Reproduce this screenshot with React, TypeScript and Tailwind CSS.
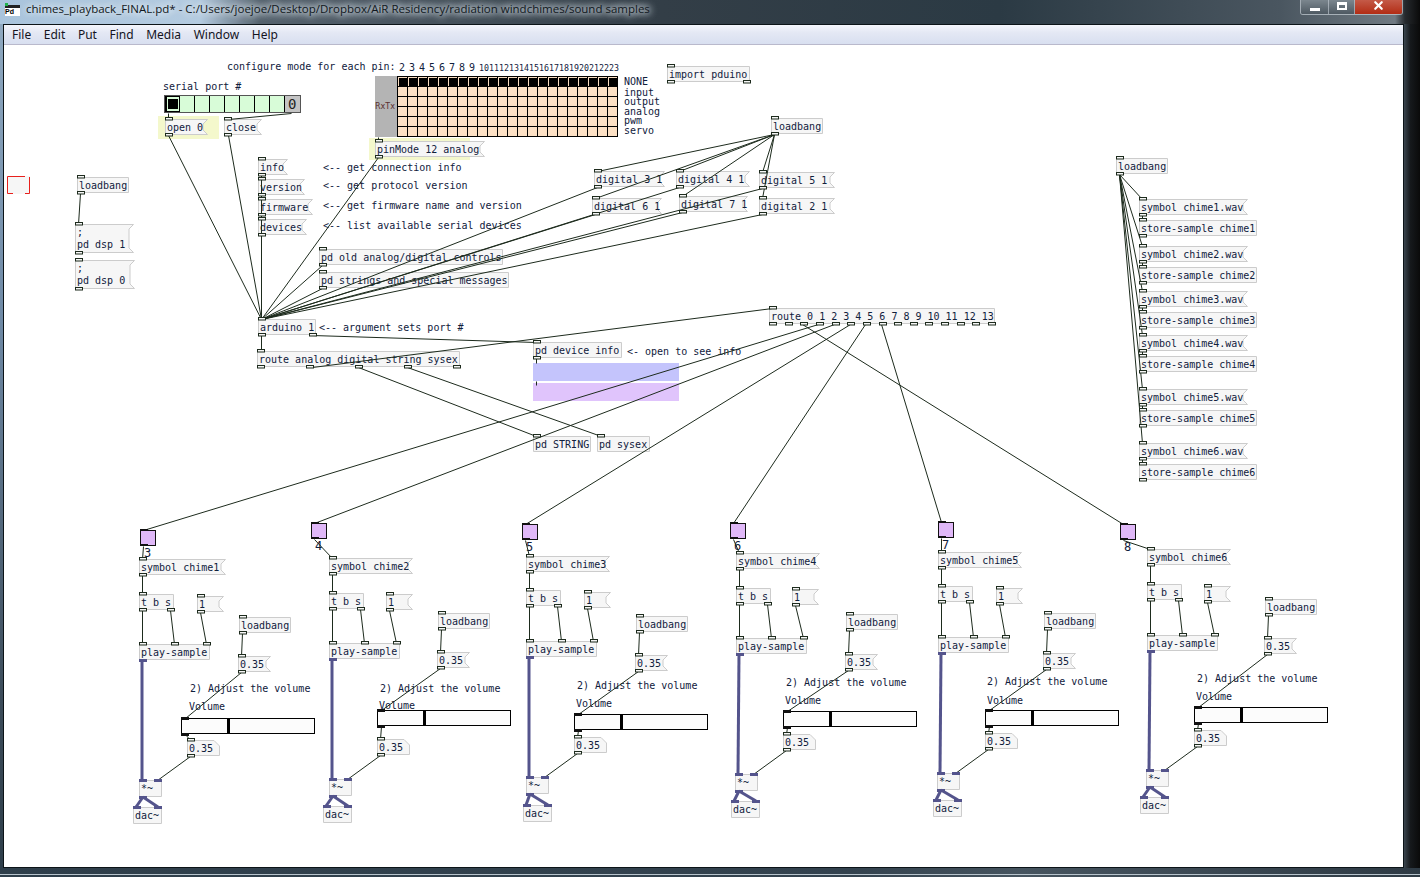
import { X } from 'lucide-react';

type Kind = 'obj' | 'msg' | 'num';

interface PdNode {
  kind: Kind;
  x: number;
  y: number;
  w: number;
  h?: number;
  text: string;
  ins?: number[];
  outs?: number[];
}

const OX = 4;
const OY = 45;
const mono = "font-['DejaVu_Sans_Mono',monospace] text-[10px] text-[#10203c]";

// evenly spread inlets, first one left, last one right
function spread(w: number, n: number) {
  if (n === 1) return [0];
  return Array.from({ length: n }, (_, i) => Math.round((i * (w - 7)) / (n - 1)));
}

function obj(x: number, y: number, w: number, text: string, ins = 1, outs = 1, h = 16): PdNode {
  return { kind: 'obj', x, y, w, h, text, ins: spread(w, ins), outs: outs ? spread(w, outs) : [] };
}

function msg(x: number, y: number, w: number, text: string, h = 16): PdNode {
  return { kind: 'msg', x, y, w, h, text, ins: [0], outs: [0] };
}

const columns = [
  { n: '3', name: 'chime1', sq: [140, 530], sym: [139, 559, 87], tbs: [139, 594], one: [197, 596], play: [139, 644], lb: [239, 617], m: [238, 656], cm: [190, 683], vol: [189, 701], sl: [181, 718], num: [187, 740], mul: [139, 780], dac: [133, 807] },
  { n: '4', name: 'chime2', sq: [311, 523], sym: [329, 558, 84], tbs: [329, 593], one: [386, 594], play: [329, 643], lb: [438, 613], m: [437, 652], cm: [380, 683], vol: [379, 700], sl: [377, 710], num: [377, 739], mul: [329, 779], dac: [323, 806] },
  { n: '5', name: 'chime3', sq: [522, 524], sym: [526, 556, 84], tbs: [526, 590], one: [584, 592], play: [526, 641], lb: [636, 616], m: [635, 655], cm: [577, 680], vol: [576, 698], sl: [574, 714], num: [574, 737], mul: [526, 777], dac: [523, 805] },
  { n: '6', name: 'chime4', sq: [730, 523], sym: [736, 553, 84], tbs: [736, 588], one: [792, 589], play: [736, 638], lb: [846, 614], m: [845, 654], cm: [786, 677], vol: [785, 695], sl: [783, 711], num: [783, 734], mul: [735, 774], dac: [731, 801] },
  { n: '7', name: 'chime5', sq: [938, 522], sym: [938, 552, 84], tbs: [938, 586], one: [996, 588], play: [938, 637], lb: [1044, 613], m: [1043, 653], cm: [987, 676], vol: [987, 695], sl: [985, 710], num: [985, 733], mul: [937, 773], dac: [933, 800] },
  { n: '8', name: 'chime6', sq: [1120, 524], sym: [1147, 549, 84], tbs: [1147, 584], one: [1204, 586], play: [1147, 635], lb: [1265, 599], m: [1264, 638], cm: [1197, 673], vol: [1196, 691], sl: [1194, 707], num: [1194, 730], mul: [1146, 770], dac: [1140, 797] },
];

const samples = [
  [199, 220, 'chime1'],
  [246, 267, 'chime2'],
  [291, 312, 'chime3'],
  [335, 356, 'chime4'],
  [389, 410, 'chime5'],
  [443, 464, 'chime6'],
] as const;

const digitals: [number, number, number, string][] = [
  [594, 171, 71, 'digital 3 1'],
  [676, 171, 74, 'digital 4 1'],
  [759, 172, 76, 'digital 5 1'],
  [592, 198, 70, 'digital 6 1'],
  [679, 196, 69, 'digital 7 1'],
  [759, 198, 76, 'digital 2 1'],
];

const nodes: PdNode[] = [
  msg(165, 119, 43, 'open 0'),
  msg(224, 119, 38, 'close'),
  msg(258, 159, 30, 'info'),
  msg(258, 179, 47, 'version'),
  msg(258, 199, 55, 'firmware'),
  msg(258, 219, 49, 'devices'),
  msg(375, 141, 110, 'pinMode 12 analog'),
  obj(667, 66, 83, 'import pduino', 1, 2),
  obj(771, 118, 52, 'loadbang'),
  ...digitals.map(([x, y, w, t]) => msg(x, y, w, t)),
  obj(77, 177, 52, 'loadbang'),
  msg(75, 224, 59, ';\npd dsp 1', 29),
  msg(75, 260, 60, ';\npd dsp 0', 29),
  obj(319, 249, 184, 'pd old analog/digital controls'),
  obj(319, 272, 190, 'pd strings and special messages'),
  obj(258, 319, 58, 'arduino 1', 1, 2),
  obj(257, 351, 203, 'route analog digital string sysex', 1, 5),
  obj(533, 342, 89, 'pd device info'),
  obj(533, 436, 58, 'pd STRING', 1, 0),
  obj(597, 436, 53, 'pd sysex', 1, 0),
  obj(769, 308, 226, 'route 0 1 2 3 4 5 6 7 8 9 10 11 12 13', 1, 15),
  obj(1116, 158, 52, 'loadbang'),
  ...samples.flatMap(([a, b, name]) => [
    msg(1139, a, 109, `symbol ${name}.wav`),
    obj(1139, b, 118, `store-sample ${name}`),
  ]),
  ...columns.flatMap((c) => [
    msg(c.sym[0], c.sym[1], c.sym[2], `symbol ${c.name}`),
    { kind: 'obj', x: c.tbs[0], y: c.tbs[1], w: 35, h: 16, text: 't b s', ins: [0], outs: [0, 28] } as PdNode,
    msg(c.one[0], c.one[1], 27, '1'),
    { kind: 'obj', x: c.play[0], y: c.play[1], w: 71, h: 16, text: 'play-sample', ins: [0, 32, 64], outs: [] } as PdNode,
    obj(c.lb[0], c.lb[1], 52, 'loadbang'),
    msg(c.m[0], c.m[1], 33, '0.35'),
    { kind: 'num', x: c.num[0], y: c.num[1], w: 33, h: 16, text: '0.35', ins: [0], outs: [0] } as PdNode,
    { kind: 'obj', x: c.mul[0], y: c.mul[1], w: 23, h: 17, text: '*~', ins: [], outs: [] } as PdNode,
    { kind: 'obj', x: c.dac[0], y: c.dac[1], w: 29, h: 17, text: 'dac~', ins: [], outs: [] } as PdNode,
  ]),
];

const loadOuts: [number, number][] = [
  [597, 171],
  [679, 171],
  [762, 172],
  [595, 198],
  [682, 196],
  [762, 198],
];

const fanIns: [number, number][] = [
  [168, 135],
  [228, 135],
  [378, 157],
  [322, 265],
  [322, 288],
  [597, 187],
  [679, 187],
  [762, 188],
  [595, 214],
  [682, 212],
  [762, 214],
];

const routeTargets: [number, number][] = [
  [818, 0],
  [834, 1],
  [850, 2],
  [865, 3],
  [881, 4],
  [802, 5],
];

type Seg = [number, number, number, number];

const wires: Seg[] = [
  [168, 113, 168, 119],
  [291, 113, 228, 119],
  [261, 175, 261, 319],
  [378, 137, 378, 141],
  [80, 193, 78, 224],
  [261, 335, 261, 351],
  [312, 335, 536, 342],
  [312, 367, 772, 308],
  [358, 367, 536, 436],
  [407, 367, 601, 436],
  [536, 358, 536, 363],
  [536, 381, 536, 385],
  ...fanIns.map(([x, y]) => [x, y, 261, 319] as Seg),
  ...loadOuts.map(([x, y]) => [774, 134, x, y] as Seg),
  ...samples.flatMap(([a, b]) => [
    [1119, 174, 1142, a] as Seg,
    [1142, a + 16, 1142, b] as Seg,
  ]),
  ...routeTargets.map(([x, i]) => [x, 324, columns[i].sq[0] + 3, columns[i].sq[1]] as Seg),
  ...columns.flatMap((c) => [
    [c.sq[0] + 3, c.sq[1] + 16, c.sym[0] + 3, c.sym[1]] as Seg,
    [c.sym[0] + 3, c.sym[1] + 16, c.tbs[0] + 3, c.tbs[1]] as Seg,
    [c.tbs[0] + 3, c.tbs[1] + 16, c.play[0] + 3, c.play[1]] as Seg,
    [c.tbs[0] + 31, c.tbs[1] + 16, c.play[0] + 35, c.play[1]] as Seg,
    [c.one[0] + 3, c.one[1] + 16, c.play[0] + 67, c.play[1]] as Seg,
    [c.lb[0] + 3, c.lb[1] + 16, c.m[0] + 3, c.m[1]] as Seg,
    [c.m[0] + 3, c.m[1] + 16, c.sl[0] + 4, c.sl[1]] as Seg,
    [c.sl[0] + 4, c.sl[1] + 16, c.num[0] + 3, c.num[1]] as Seg,
    [c.num[0] + 3, c.num[1] + 16, c.mul[0] + 18, c.mul[1]] as Seg,
  ]),
];

function PatchBox({ node }: { node: PdNode }) {
  const h = node.h ?? 16;
  const w = node.w;
  const points =
    node.kind === 'msg'
      ? `0.5,0.5 ${w - 0.5},0.5 ${w - 5},5 ${w - 5},${h - 5} ${w - 0.5},${h - 0.5} 0.5,${h - 0.5}`
      : node.kind === 'num'
        ? `0.5,0.5 ${w - 6},0.5 ${w - 0.5},6 ${w - 0.5},${h - 0.5} 0.5,${h - 0.5}`
        : `0.5,0.5 ${w - 0.5},0.5 ${w - 0.5},${h - 0.5} 0.5,${h - 0.5}`;
  return (
    <div className="absolute" style={{ left: node.x - OX, top: node.y - OY, width: w, height: h }}>
      <svg className="absolute inset-0" width={w} height={h}>
        <polygon points={points} fill="#f6f6f6" stroke="#cccccc" />
      </svg>
      <div className={`absolute inset-0 flex items-center pl-[2px] pt-[1px] leading-[12px] whitespace-pre ${mono}`}>
        {node.text}
      </div>
    </div>
  );
}

function Comment({ x, y, text }: { x: number; y: number; text: string }) {
  return (
    <div className={`absolute leading-[12px] whitespace-pre ${mono}`} style={{ left: x - OX, top: y - OY - 6 }}>
      {text}
    </div>
  );
}

function Slider({ x, y }: { x: number; y: number }) {
  return (
    <div
      className="absolute h-[16px] w-[134px] border border-black bg-[#fcfcfc]"
      style={{ left: x - OX, top: y - OY }}
    >
      <div className="absolute left-[45px] top-0 bottom-0 w-[3px] bg-black" />
    </div>
  );
}

function PinGrid() {
  return (
    <div className="absolute left-[371px] top-[31px] flex h-[61px]">
      <div className="flex w-[22px] items-center bg-[#b4b4b4] font-['DejaVu_Sans',sans-serif] text-[8px] text-[#5a3030]">
        RxTx
      </div>
      <div className="grid grid-cols-[repeat(22,10px)] border-t border-l border-black">
        {Array.from({ length: 132 }, (_, i) => (
          <div key={i} className="flex h-[10px] w-[10px] items-center justify-center border-r border-b border-black bg-[#fce0c4]">
            {i < 22 && <div className="h-[8px] w-[8px] bg-black" />}
          </div>
        ))}
      </div>
    </div>
  );
}

function PortRadio() {
  return (
    <div className="absolute left-[160px] top-[50px] flex h-[18px] w-[137px] border border-[#555555] bg-[#c4c4c4]">
      {Array.from({ length: 8 }, (_, i) => (
        <div
          key={i}
          className={`flex w-[15px] items-center justify-center border-r border-black bg-[#d8fcd8] ${i === 0 ? 'border-l-2 border-t border-b' : ''}`}
        >
          {i === 0 && <div className="h-[10px] w-[10px] bg-black" />}
        </div>
      ))}
      <div className="flex-1 pl-[3px] font-['DejaVu_Sans_Mono',monospace] text-[14px] leading-[16px] text-[#222222]">0</div>
    </div>
  );
}

function Iolets() {
  return (
    <>
      {nodes.flatMap((n, i) => {
        const h = n.h ?? 16;
        return [
          ...(n.ins ?? []).map((o, j) => (
            <rect key={`i${i}-${j}`} x={n.x + o + 0.5} y={n.y - 1.5} width={7} height={2.5} fill="#f6f6f6" stroke="#1d2b1d" />
          )),
          ...(n.outs ?? []).map((o, j) => (
            <rect key={`o${i}-${j}`} x={n.x + o + 0.5} y={n.y + h - 1.5} width={7} height={2.5} fill="#f6f6f6" stroke="#1d2b1d" />
          )),
        ];
      })}
    </>
  );
}

function PatchWires() {
  return (
    <svg className="pointer-events-none absolute inset-0" width="1400" height="823">
      <g transform={`translate(${-OX},${-OY})`}>
        {wires.map(([a, b, c, d], i) => (
          <line key={i} x1={a + 0.5} y1={b + 0.5} x2={c + 0.5} y2={d + 0.5} stroke="#1d2b1d" strokeWidth="1" />
        ))}
        {columns.map((c) => (
          <g key={c.n}>
            <line x1={c.play[0] + 3} y1={c.play[1] + 16} x2={c.mul[0] + 3} y2={c.mul[1]} stroke="#54548c" strokeWidth="3" />
            <line x1={c.mul[0] + 4} y1={c.mul[1] + 17} x2={c.dac[0] + 3} y2={c.dac[1]} stroke="#54548c" strokeWidth="3" />
            <line x1={c.mul[0] + 4} y1={c.mul[1] + 17} x2={c.dac[0] + 25} y2={c.dac[1]} stroke="#54548c" strokeWidth="3" />
            <rect x={c.play[0]} y={c.play[1] + 15} width={8} height={3} fill="#54548c" />
            <rect x={c.mul[0]} y={c.mul[1] - 1} width={8} height={3} fill="#54548c" />
            <rect x={c.mul[0] + 15} y={c.mul[1] - 1} width={8} height={3} fill="#54548c" />
            <rect x={c.mul[0]} y={c.mul[1] + 16} width={8} height={3} fill="#54548c" />
            <rect x={c.dac[0]} y={c.dac[1] - 1} width={8} height={3} fill="#54548c" />
            <rect x={c.dac[0] + 21} y={c.dac[1] - 1} width={8} height={3} fill="#54548c" />
            <rect x={c.sl[0]} y={c.sl[1] - 1} width={8} height={3} fill="#111111" />
            <rect x={c.sl[0]} y={c.sl[1] + 15} width={8} height={3} fill="#111111" />
            <rect x={c.sq[0]} y={c.sq[1] + 14} width={8} height={2} fill="#111111" />
            <rect x={c.sq[0]} y={c.sq[1] - 1} width={8} height={2} fill="#111111" />
          </g>
        ))}
        <Iolets />
      </g>
    </svg>
  );
}

function Patch() {
  const pins = [2, 3, 4, 5, 6, 7, 8, 9, 10, 11, 12, 13, 14, 15, 16, 17, 18, 19, 20, 21, 22, 23];
  const modes = [
    ['NONE', 82],
    ['input', 93],
    ['output', 102],
    ['analog', 112],
    ['pwm', 121],
    ['servo', 131],
  ] as const;
  return (
    <div className="relative flex-1 overflow-hidden bg-white">
      <div className="absolute left-[154px] top-[71px] h-[23px] w-[61px] bg-[#f4f8cc]" />
      <div className="absolute left-[365px] top-[93px] h-[22px] w-[101px] bg-[#f4f8cc]" />
      <div className="absolute left-[529px] top-[318px] h-[18px] w-[146px] bg-[#c4c4fc]" />
      <div className="absolute left-[529px] top-[338px] h-[18px] w-[146px] bg-[#e0c4fc]" />

      <Comment x={227} y={67} text="configure mode for each pin:" />
      <Comment x={163} y={87} text="serial port #" />
      <div className={`absolute left-[395px] top-[17px] flex leading-[12px] ${mono}`}>
        {pins.map((p) => (
          <span key={p} className={`w-[10px] whitespace-pre ${p > 9 ? 'text-[8.3px]' : ''}`}>{p}</span>
        ))}
      </div>
      {modes.map(([t, y]) => (
        <Comment key={t} x={624} y={y} text={t} />
      ))}
      <Comment x={323} y={168} text="<-- get connection info" />
      <Comment x={323} y={186} text="<-- get protocol version" />
      <Comment x={323} y={206} text="<-- get firmware name and version" />
      <Comment x={323} y={226} text="<-- list available serial devices" />
      <Comment x={319} y={328} text="<-- argument sets port #" />
      <Comment x={627} y={352} text="<- open to see info" />

      <PortRadio />
      <PinGrid />

      <svg className="absolute left-[3px] top-[131px]" width="23" height="18">
        <rect x="0" y="0" width="23" height="18" fill="#f6f6f6" />
        <path d="M0.5 17.5V0.5H18M6 17.5H0.5M18 17.5H22.5V1" fill="none" stroke="#e8201c" />
      </svg>

      {nodes.map((n, i) => (
        <PatchBox key={i} node={n} />
      ))}

      {columns.map((c) => (
        <div key={c.n}>
          <div
            className="absolute h-[16px] w-[16px] border border-[#111111] bg-[#e0b8f8]"
            style={{ left: c.sq[0] - OX, top: c.sq[1] - OY }}
          />
          <div
            className="absolute font-['DejaVu_Sans_Mono',monospace] text-[12px] leading-[12px] text-[#10203c]"
            style={{ left: c.sq[0] + 4 - OX, top: c.sq[1] + 17 - OY }}
          >
            {c.n}
          </div>
          <Comment x={c.cm[0]} y={c.cm[1] + 6} text="2) Adjust the volume" />
          <Comment x={c.vol[0]} y={c.vol[1] + 6} text="Volume" />
          <Slider x={c.sl[0]} y={c.sl[1]} />
        </div>
      ))}

      <PatchWires />
    </div>
  );
}

export default function App() {
  return (
    <div className="flex h-[877px] w-[1420px] flex-col overflow-hidden bg-[#1a2126]">
      <div className="flex h-[24px] shrink-0 items-start bg-[linear-gradient(90deg,#a9c4dc_0,#b4cbe0_200px,#56636e_260px,#333e47_660px,#2b3a44_1000px,#4a5660_1280px,#707a82_1395px,#262a2e_1405px,#0a0a0a_1420px)]">
        <div className="relative ml-[5px] mt-[5px] h-[11px] w-[15px] bg-white">
          <div className="absolute -top-[2px] left-0 h-[3px] w-[3px] bg-[#22b14c]" />
          <div className="h-[3px] bg-[#222222]" />
          <span className="block font-['Liberation_Sans',sans-serif] text-[7px] font-bold leading-[8px] text-black">Pd</span>
        </div>
        <span className="ml-[6px] mt-[1px] font-['Open_Sans',sans-serif] text-[11.5px] leading-[16px] text-[#111820] [text-shadow:0_0_6px_#e8f0f8,0_0_8px_#e8f0f8,0_0_10px_#c8d4e0]">
          chimes_playback_FINAL.pd* - C:/Users/joejoe/Desktop/Dropbox/AiR Residency/radiation windchimes/sound samples
        </span>
        <div className="ml-auto mr-[17px] flex h-[15px] w-[103px] overflow-hidden rounded-b-[3px] border border-t-0 border-[#c8d0d8]/70">
          <div className="flex w-[28px] items-center justify-center border-r border-[#c8d0d8]/60 bg-[linear-gradient(#7b868e,#4e5962)]">
            <div className="mt-[5px] h-[3px] w-[10px] bg-white" />
          </div>
          <div className="flex w-[26px] items-center justify-center border-r border-[#c8d0d8]/60 bg-[linear-gradient(#7b868e,#4e5962)]">
            <div className="mb-[3px] h-[8px] w-[10px] border-2 border-t-[3px] border-white" />
          </div>
          <div className="flex flex-1 items-center justify-center bg-[linear-gradient(#c45a48,#b22c14)]">
            <X className="-mt-[3px] h-[13px] w-[13px] text-white" strokeWidth={4} />
          </div>
        </div>
      </div>
      <div className="flex min-h-0 flex-1">
        <div className="w-[3px] shrink-0 bg-[linear-gradient(#8ea8c0,#6f8aa6_35%,#3c4c5a_80%,#2e3e4a)]" />
        <div className="flex min-w-0 flex-1 flex-col border border-[#0c1418] bg-white">
          <div className="flex h-[20px] shrink-0 items-center gap-[12.6px] border-b border-[#b9b9cc] bg-[linear-gradient(#f4f6fc,#e4e8f4_40%,#d8dff0)] pl-[8px] font-['Noto_Sans',sans-serif] text-[12px] leading-[18px] text-[#14141e]">
            <span>File</span>
            <span>Edit</span>
            <span>Put</span>
            <span>Find</span>
            <span>Media</span>
            <span>Window</span>
            <span>Help</span>
          </div>
          <Patch />
        </div>
        <div className="w-[16px] shrink-0 bg-[linear-gradient(90deg,#3a454e,#16191c_40%,#0a0a0a)]" />
      </div>
      <div className="flex h-[9px] shrink-0 flex-col bg-[linear-gradient(90deg,#2e3e4a,#33424e_60%,#46545f_72%,#2e3a44)]">
        <div className="mt-[6px] h-px bg-[#b8c4cc]" />
      </div>
    </div>
  );
}
